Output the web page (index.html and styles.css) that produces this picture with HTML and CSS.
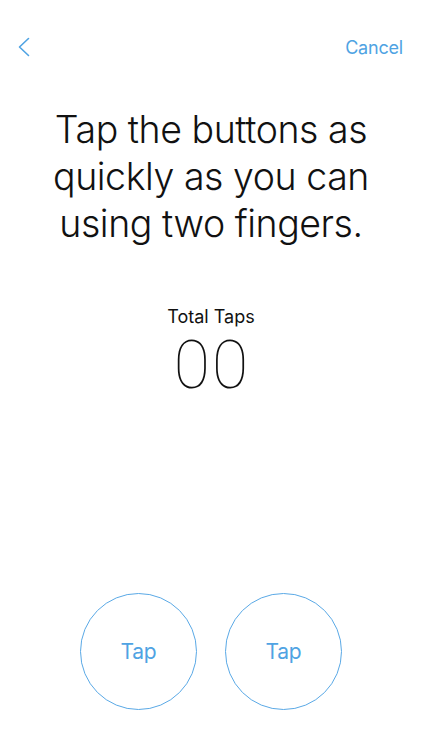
FILE: index.html
```html
<!DOCTYPE html>
<html>
<head>
<meta charset="utf-8">
<link rel="stylesheet" href="styles.css">
</head>
<body>
<div class="screen">
  <div class="nav">
    <svg class="back" width="14" height="20" viewBox="0 0 14 20"><path d="M11.5 1.5 L2.5 10 L11.5 18.5" fill="none" stroke="#4fa3e3" stroke-width="1.6" stroke-linecap="round" stroke-linejoin="round"/></svg>
    <span class="cancel">Cancel</span>
  </div>
  <h1 class="title">Tap the buttons as<br>quickly as you can<br>using two fingers.</h1>
  <div class="counter">
    <div class="label">Total Taps</div>
    <div class="count">00</div>
  </div>
  <div class="buttons">
    <div class="tap">Tap</div>
    <div class="tap">Tap</div>
  </div>
</div>
</body>
</html>
```
FILE: styles.css
```css
html, body { margin: 0; padding: 0; background: #fff; }
body { font-family: Inter, "Liberation Sans", sans-serif; }
.screen { width: 422px; height: 750px; display: flex; flex-direction: column; align-items: center; }
.nav { width: 100%; box-sizing: border-box; display: flex; justify-content: space-between; align-items: center; padding: 36px 19px 0 17px; height: 58px; }
.back { display: block; }
.cancel { color: #4fa3e3; font-size: 18px; font-weight: 400; letter-spacing: -0.2px; }
.title { margin: 48px 0 0; font-size: 37.5px; line-height: 47px; font-weight: 300; text-align: center; color: #111; letter-spacing: -0.45px; }
.counter { margin-top: 61px; display: flex; flex-direction: column; align-items: center; }
.label { font-size: 18px; line-height: 18px; color: #111; letter-spacing: 0; }
.count { font-family: Roboto, Inter, sans-serif; font-size: 66px; line-height: 50px; font-weight: 100; color: #111; margin-top: 15px; letter-spacing: 2px; padding-left: 2px; }
.buttons { margin-top: auto; margin-bottom: 40px; display: flex; gap: 28px; }
.tap { width: 115px; height: 115px; border: 1.5px solid #5aa9e6; border-radius: 50%; display: flex; align-items: center; justify-content: center; color: #4fa3e3; font-size: 21px; letter-spacing: -0.2px; }
```
